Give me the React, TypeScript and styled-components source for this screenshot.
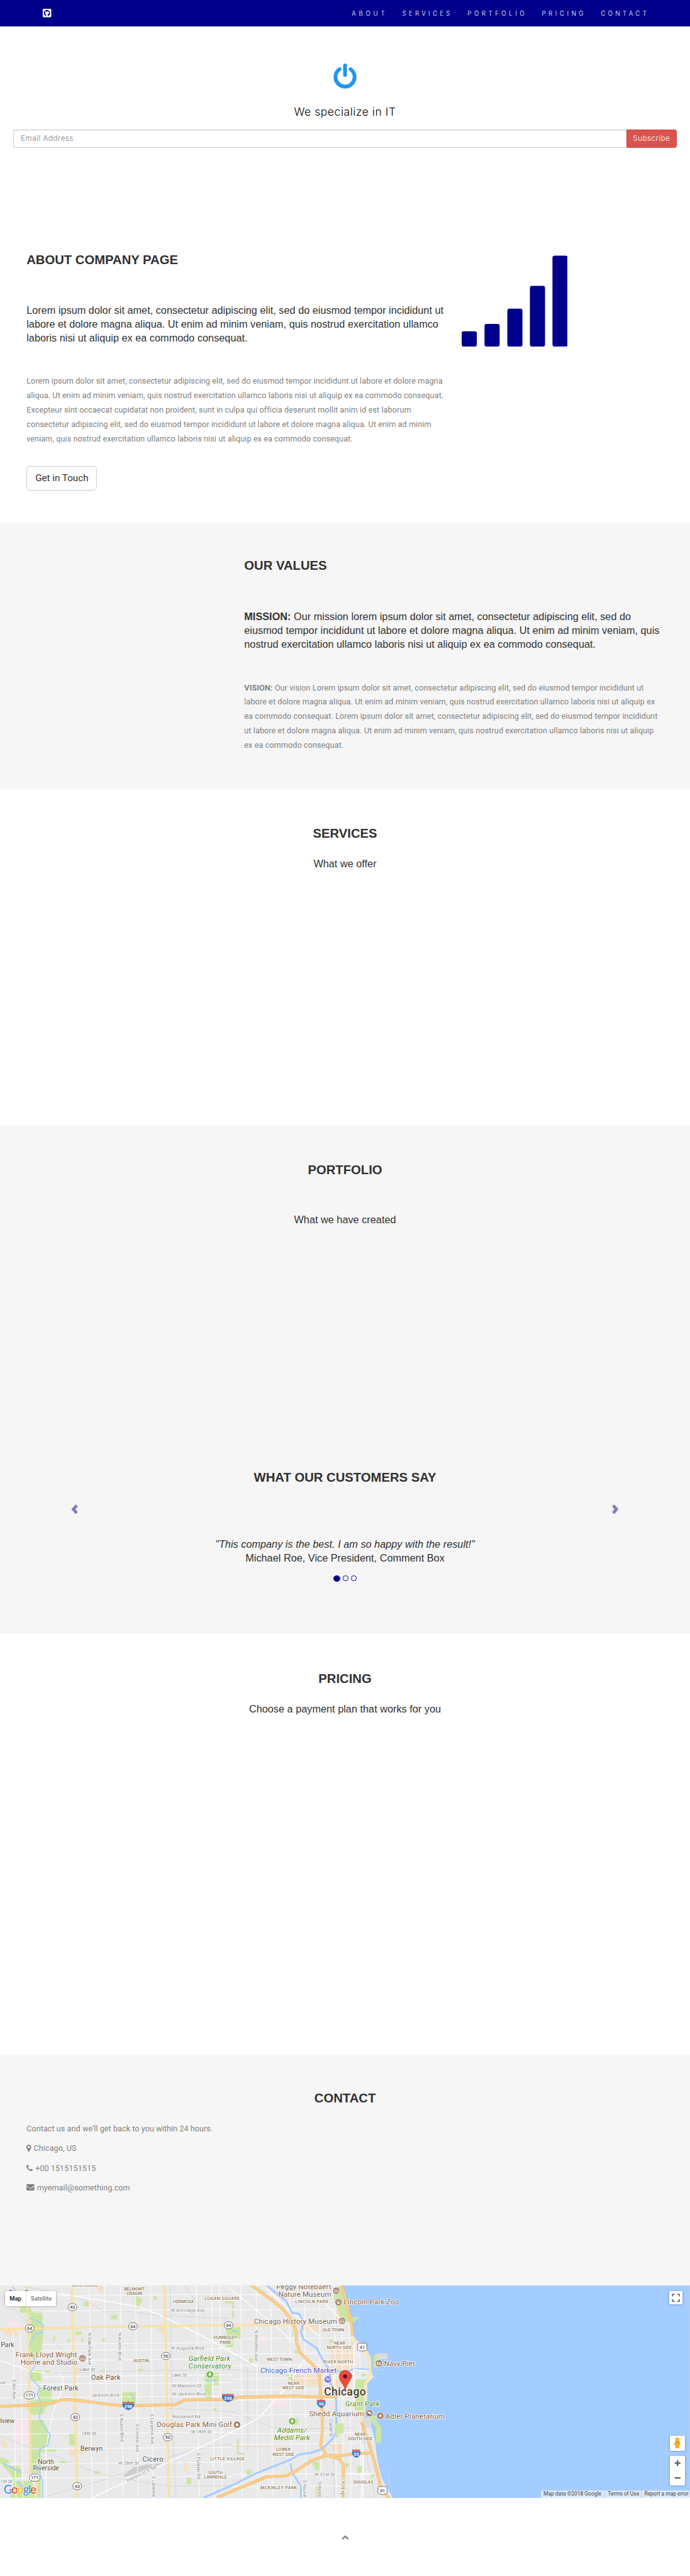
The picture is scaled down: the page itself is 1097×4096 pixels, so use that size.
import React from "react";
import styled, { createGlobalStyle } from "styled-components";
import { FaGithubSquare } from "react-icons/fa";

const GlobalStyle = createGlobalStyle`
  body { margin: 0; background: #fff; overflow-x: hidden; }
  *, *::before, *::after { box-sizing: border-box; }
`;

const SANS = `"Liberation Sans", Arial, sans-serif`;
const BODY = `Roboto, "Liberation Sans", sans-serif`;
const GEO = `Inter, "Open Sans", sans-serif`;

const Page = styled.div`
  zoom: 0.8442;
  width: 1299.5px;
  height: 4851px;
  overflow: hidden;
  display: flex;
  flex-direction: column;
  font: 15px/27px ${BODY};
  color: #818181;
`;

const NavBar = styled.header`
  height: 50px;
  flex: none;
  background: #00008b;
  color: #fff;
  display: flex;
  justify-content: space-between;
  align-items: center;
  padding: 0 63px 0 79px;
`;
const Brand = styled.a`
  display: flex;
  font-size: 18.3px;
`;
const NavList = styled.nav`
  display: flex;
`;
const NavLink = styled.a<{ $width: number; $gap: number }>`
  width: ${(p) => p.$width}px;
  padding: 2px 0 0 15px;
  white-space: nowrap;
  font: 300 11.6px/20px ${GEO};
  letter-spacing: ${(p) => p.$gap}px;
`;

const Hero = styled.section`
  height: 374px;
  flex: none;
  padding: 70px 25px 0;
  display: flex;
  flex-direction: column;
  align-items: center;
  font-family: ${GEO};
`;
const Tagline = styled.p`
  margin: 27px 0 0;
  color: #000;
  font-size: 20.8px;
  font-weight: 350;
  line-height: 30px;
  letter-spacing: 0.62px;
`;
const Subscribe = styled.form`
  display: flex;
  width: 100%;
  height: 34px;
  margin-top: 19px;
`;
const Email = styled.div`
  flex: 1;
  border: 1px solid #ccc;
  border-right: 0;
  border-radius: 4px 0 0 4px;
  box-shadow: inset 0 1px 1px rgba(0, 0, 0, 0.075);
  padding-left: 13px;
  font-size: 14px;
  font-weight: 400;
  line-height: 33px;
  letter-spacing: 0.42px;
  color: #999;
`;
const SubscribeButton = styled.button`
  width: 95px;
  padding: 0;
  border: 1px solid #d43f3a;
  border-radius: 0 4px 4px 0;
  background: #d9534f;
  color: #fff;
  font: 300 14px/32px ${GEO};
  letter-spacing: 0.5px;
`;

const Band = styled.section<{ $height: number; $tint?: boolean; $top: number; $center?: boolean }>`
  height: ${(p) => p.$height}px;
  flex: none;
  padding: ${(p) => p.$top}px 50px 0;
  background: ${(p) => (p.$tint ? "#f6f6f6" : "#fff")};
  text-align: ${(p) => (p.$center ? "center" : "left")};
`;
const Title = styled.h2<{ $top?: number; $bottom?: number; $center?: boolean }>`
  margin: ${(p) => p.$top ?? 0}px 0 ${(p) => p.$bottom ?? 0}px;
  font: bold 24px/33px ${SANS};
  color: #303030;
  ${(p) => p.$center && "text-align: center;"}
`;
const Lead = styled.h4<{ $top: number }>`
  margin: ${(p) => p.$top}px 0 0;
  font: normal 19.25px/26.125px ${SANS};
  letter-spacing: 0.022px;
  color: #303030;
  white-space: nowrap;
`;
const Copy = styled.p<{ $top: number }>`
  margin: ${(p) => p.$top}px 0 0;
  letter-spacing: 0.085px;
  white-space: nowrap;
`;
const Columns = styled.div<{ $left: number; $width: number }>`
  display: grid;
  grid-template-columns: ${(p) => p.$width}px 1fr;
  padding-left: ${(p) => p.$left}px;
  column-gap: 18px;
`;
const TouchButton = styled.button`
  display: block;
  margin-top: 37px;
  width: 133px;
  height: 46px;
  padding: 0;
  border: 1px solid #ccc;
  border-radius: 6px;
  background: #fff;
  color: #333;
  font: 18px/24px ${BODY};
`;
const Signal = styled.svg`
  width: 200px;
  height: 172px;
  margin-top: 6.5px;
`;

const CarouselRow = styled.div`
  display: flex;
  justify-content: space-between;
  padding: 0 84px;
  margin-top: 29.5px;
  height: 30px;
`;
const Arrow = styled.svg`
  width: 14px;
  height: 28px;
  overflow: visible;
  fill: #7b79c2;
  filter: drop-shadow(0 1px 1px rgba(0, 0, 0, 0.3));
`;
const Dots = styled.div`
  display: flex;
  justify-content: center;
  align-items: center;
  gap: 5.5px;
  margin-top: 19px;
  height: 12px;
`;
const Dot = styled.span<{ $active?: boolean }>`
  width: ${(p) => (p.$active ? 12 : 10)}px;
  height: ${(p) => (p.$active ? 12 : 10)}px;
  border: 1px solid #00008b;
  border-radius: 50%;
  background: ${(p) => (p.$active ? "#00008b" : "transparent")};
`;

const ContactLine = styled.p`
  display: flex;
  align-items: center;
  gap: 4.5px;
  margin: 0 0 10px;
  height: 27px;
  letter-spacing: 0.04px;
`;
const Glyph = styled.svg`
  fill: #818181;
  flex: none;
  margin-top: -3px;
`;

const MapFrame = styled.section`
  position: relative;
  height: 400px;
  flex: none;
  overflow: hidden;
  background: #a3ccff;
`;
const MapArt = styled.svg`
  display: block;
  width: 1299px;
  height: 400px;
  font-family: ${BODY};
`;
const MapTypes = styled.div`
  position: absolute;
  left: 10px;
  top: 10px;
  display: flex;
  height: 29px;
  background: #fff;
  border-radius: 2px;
  box-shadow: 0 1px 4px -1px rgba(0, 0, 0, 0.4);
  font-size: 11px;
  line-height: 29px;
  text-align: center;
`;
const MapType = styled.span<{ $active?: boolean }>`
  width: ${(p) => (p.$active ? 38 : 58)}px;
  color: ${(p) => (p.$active ? "#000" : "#565656")};
  font-weight: ${(p) => (p.$active ? 500 : 400)};
  border-left: ${(p) => (p.$active ? "0" : "1px solid #e2e2e2")};
`;
const MapControl = styled.div<{ $right: number; $top: number; $w: number; $h: number }>`
  position: absolute;
  right: ${(p) => p.$right}px;
  top: ${(p) => p.$top}px;
  width: ${(p) => p.$w}px;
  height: ${(p) => p.$h}px;
  background: #fff;
  border-radius: 2px;
  box-shadow: 0 1px 4px -1px rgba(0, 0, 0, 0.4);
  svg { display: block; }
`;
const Credits = styled.div`
  position: absolute;
  right: 0;
  bottom: 0;
  display: flex;
  gap: 1px;
  font-size: 10px;
  line-height: 14px;
  color: #444;
  white-space: nowrap;
`;
const Credit = styled.span<{ $w: number }>`
  width: ${(p) => p.$w}px;
  padding-left: 5px;
  background: rgba(245, 245, 245, 0.7);
`;
const Footer = styled.footer`
  display: flex;
  justify-content: center;
  padding-top: 70px;
`;

const LINKS: [string, number, number][] = [
  ["ABOUT", 95, 5.5],
  ["SERVICES", 123, 5.02],
  ["PORTFOLIO", 140, 5.28],
  ["PRICING", 111, 5.29],
  ["CONTACT", 120, 5.06],
];

type Pt = [number, number];
type Tag = [string, number, number];

const Label = ({ x, y, size = 30, fill = "#8c7350", anchor = "middle", weight = 500, italic, rotate, w, children }: {
  x: number; y: number; size?: number; fill?: string; anchor?: "start" | "middle" | "end";
  weight?: number; italic?: boolean; rotate?: number; w?: number; children: string;
}) => (
  <text x={x} y={y} fontSize={size} fill={fill} textAnchor={anchor} fontWeight={weight}
    fontStyle={italic ? "italic" : "normal"} stroke="#fff" strokeWidth={6} strokeLinejoin="round" paintOrder="stroke"
    textLength={w} transform={rotate === undefined ? undefined : `rotate(${rotate} ${x} ${y})`}>{children}</text>
);
const Street = ({ x, y, rotate, children, w }: { x: number; y: number; rotate?: number; w?: number; children: string }) => (
  <Label x={x} y={y} size={27} fill="#7d7d7d" anchor="start" weight={400} rotate={rotate} w={w}>{children}</Label>
);
const RouteBadge = ({ x, y, n }: { x: number; y: number; n: string }) => {
  const w = n.length > 2 ? 61 : 49;
  return (
    <g>
      <rect x={x - w / 2} y={y - 20} width={w} height={40} rx={20} fill="#fff" stroke="#555" strokeWidth={3} />
      <text x={x} y={y + 9} fontSize={26} fontWeight={500} textAnchor="middle" fill="#444">{n}</text>
    </g>
  );
};
const UsBadge = ({ x, y }: { x: number; y: number }) => (
  <g>
    <path d={`M${x - 20} ${y - 23}q10 6 20 0q10 6 20 0l7 9q-6 8 0 18q3 12-8 16q-12 0-19 5q-7-5-19-5q-11-4-8-16q6-10 0-18z`} fill="#fff" stroke="#555" strokeWidth={3} />
    <text x={x} y={y + 10} fontSize={26} fontWeight={500} textAnchor="middle" fill="#444">41</text>
  </g>
);
const Interstate = ({ x, y, n }: { x: number; y: number; n: string }) => {
  const h = n.length > 2 ? 34 : 24;
  return (
    <g>
      <path d={`M${x - h} ${y - 14}h${2 * h}q4 24-${h} 38q-${h + 4}-14-${h}-38z`} fill="#3b78c8" />
      <path d={`M${x - h + 2} ${y - 25}q${h / 2} 6 ${h - 2} 0q${h / 2} 6 ${h - 2} 0l-2 10h-${2 * h - 4}z`} fill="#d8575d" />
      <text x={x} y={y + 11} fontSize={26} fontWeight={700} textAnchor="middle" fill="#fff">{n}</text>
    </g>
  );
};
const Poi = ({ x, y, color = "#a07c64", kind = "museum" }: { x: number; y: number; color?: string; kind?: string }) => (
  <g transform={`translate(${x} ${y})`}>
    <circle r={20} fill={color} stroke="#fff" strokeWidth={3} />
    {kind === "museum" && <path d="M-11-3L0-10L11-3V8H-11ZM-5-1V5M0-1V5M5-1V5" fill="none" stroke="#fff" strokeWidth={3} />}
    {kind === "ring" && <circle r={8} fill="#fff" />}
    {kind === "tree" && <path d="M0-14L8-3H5L10 6H2V12H-2V6H-10L-5-3H-8Z" fill="#fff" />}
    {kind === "paw" && <g fill="#fff"><ellipse cy={5} rx={7} ry={5} /><circle cx={-9} cy={-2} r={3} /><circle cx={-4} cy={-8} r={3} /><circle cx={4} cy={-8} r={3} /><circle cx={9} cy={-2} r={3} /></g>}
    {kind === "cart" && <path d="M-11-8H-7L-4 4H7L10-5H-6M-3 9h1M6 9h1" fill="none" stroke="#fff" strokeWidth={4} />}
    {kind === "camera" && <g><rect x={-10} y={-5} width={20} height={14} fill="#fff" /><circle cy={2} r={4} fill={color} /><circle cx={-7} cy={-9} r={2.5} fill="#fff" /></g>}
    {kind === "fish" && <path d="M-12-8Q2-14 11 0V10L3 3Q-5 5-12-8Z" fill="#fff" />}
  </g>
);

const PARKS_WEST: string[] = [
  "M112 160H165V200H112Z", "M165 45V165L190 200H240V260L245 300L240 370L235 412L200 460L165 450L175 300L170 200Z",
  "M170 540L195 525H235V585H180Z", "M225 620L290 640V690L320 690L265 730L240 775H180L150 740L155 700L215 690Z",
  "M175 805H245L285 890L270 950L225 970H177Z", "M177 970H320V983H230V1105H180L165 1060Z",
  "M0 1015L50 1030V1065H110L120 1085V1130H90V1150H180L200 1245H60L80 1150L50 1100L0 1050Z",
  "M200 1140H230V1245H215Z", "M762 108H788V118H803V145H790V170H762Z", "M687 648H768V715H687Z",
  "M1157 540H1238V608H1195V685H1158Z", "M867 108H888V125H867Z", "M472 137H503V162H472Z", "M627 212H663V236H627Z",
  "M426 303H459V325H426Z", "M578 343H598V362H578Z", "M1055 1130H1080V1170H1055Z", "M335 1035L378 1040V1053H340Z",
  "M458 345H472V365H458Z", "M300 328H312V360H300Z", "M380 347H395V367H380Z", "M390 880H424V950H392Z",
  "M530 1095H564V1110H535Z", "M783 516H808V528H783Z", "M568 524H594V535H568Z", "M248 527H282V540H248Z",
  "M1202 738H1222V752H1202Z", "M1278 280H1360V350H1318V395H1278ZM1268 135H1322V230H1312V145H1268Z",
];
const PARKS_EAST: string[] = [
  "M590 60L645 45L665 150L700 225L745 222L700 260L640 235L600 140Z",
  "M720 575H800L775 600V750H735V760L715 745Z", "M750 545H778V558H750Z", "M820 435H845V510H820Z",
  "M790 780H835V800L865 850L862 935H835V850Z", "M470 1045L513 1040V1090H495Z", "M728 1065H755V1105H728Z",
  "M605 825H650V880H620V905H605Z", "M338 562H365V582H345Z", "M367 795H395V832H367Z", "M375 410H398V430H375Z",
  "M118 458H140V480H118Z", "M570 350H592V370H570Z", "M495 1180H520V1245H495Z", "M50 910L58 910V990H90V1000H50Z",
  "M362 300H372V330H362Z", "M800 1110H826V1130H805Z", "M660 1040L683 1055V1070H662Z", "M100 1090L130 1085V1115H105Z",
];
const TAN: string[] = [
  "M15 300L75 290L120 325L40 335Z", "M545 45H585V85H560Z", "M890 280H928V325H910V300H890Z", "M415 515H445V545H415Z",
  "M1035 1040H1060V1095H1040Z", "M392 970H478V995H430V1010H392Z", "M700 1215H740V1222H700Z", "M0 920L40 930V960L20 970Z",
  "M1870 410H1990V560H1870Z", "M1640 550H1820V610H1640Z", "M1860 560H1985V640H1860Z", "M1700 255H1800V300H1700Z",
  "M1900 130H1950V250H1900Z", "M1300 950H1600V958H1300Z", "M1850 940L1930 930L1940 1000H1920Z", "M1970 360H2000V500H1970Z",
];
const PINK: string[] = [
  "M50 240L110 255V290H50Z", "M85 808H160V950L90 930Z", "M505 135H535V165H505Z", "M660 475H678V497H660Z",
  "M1225 650H1240V680H1225Z", "M1575 665H1625V725H1535V690Z", "M2000 430H2035V460H2000Z", "M1470 330H1495V370H1470Z",
];
const WEST_V = [75, 115, 505, 590, 680, 765, 852, 1110, 1195, 1240];
const WEST_H = [100, 185, 373, 408, 465, 556, 600, 675, 797, 880, 965, 1050, 1130];
const EAST_V = [70, 157, 240, 345, 430, 515, 600, 640, 683, 740];
const EAST_H = [95, 180, 345, 430, 495, 570, 632, 690, 775, 880, 940, 1110, 1180];
const YELLOW_ROADS: string[] = [
  "M150 45L157 170L160 350L165 530L168 850L175 980V1060L168 1100L208 1140V1245",
  "M406 45L410 270L420 520L425 780L432 1000L437 1245",
  "M930 45L934 270L940 500L945 800L950 1040L955 1245",
  "M0 292L250 287L700 277L1290 269L1450 266L1700 264",
];
const LAKE_ROAD: string[] = ["M1993 330L2010 360L2060 410L2090 460V570L2060 600V750L2042 760V815L2055 850"];
const FREEWAYS: string[] = [
  "M0 727L170 722L230 715L295 710L345 692L380 690L460 697L560 710L680 724L790 724L990 718L1040 694L1100 691L1310 690L1340 677L1690 670L1750 675L1910 674",
  "M1415 40L1540 130L1600 180L1640 230L1675 305L1675 370L1700 430L1775 500L1805 550L1812 670L1820 760L1820 880L1812 950L1845 1005L1920 1025L1940 1060V1250",
  "M1225 1245L1340 1195L1510 1125L1620 1120L1670 1095L1760 1035L1845 1005L1940 1005L2010 995L2090 992",
  "M1930 40L1970 190L1985 260L1993 330",
  "M2042 815L2085 940L2120 1060L2155 1200L2200 1250",
];
const RIVER = "M1510 45L1560 90L1615 130L1650 200L1690 205L1715 250L1700 310L1715 350L1790 400L1825 470L1860 520L1868 600L1890 650L1900 700L1900 870L1880 910L1820 970L1760 990L1690 1000L1640 1030L1540 1070L1440 1110L1320 1170L1150 1245";
const CREEK = "M70 50L100 90L145 140L165 180L160 230L210 245L245 270L240 310L200 320L170 370L160 420L200 470L200 495L170 540L175 570L225 620L210 660L220 680L235 720L220 790L240 830L285 890L270 950L222 970L225 1040L220 1090L240 1150V1245";
const RAILS: string[] = [
  "M130 50L330 90L430 110L520 150L585 192L720 190L900 215L1290 230", "M0 100L160 260L300 370L390 440",
  "M0 895L180 965L340 1020L480 1080L640 1130L960 1180L1320 1175", "M300 540L700 530L1320 520L1700 560",
  "M960 45L972 800L995 1245", "M270 1235L600 1140L900 1030L1180 955L1320 940", "M1040 45L1110 140L1160 235",
  "M1340 440L1400 520V980", "M950 740L1320 760L1540 850L1750 855L2000 850", "M2045 850L2060 960L2120 1245", "M1880 830L1890 1245",
];

const MAP_POIS: Tag[] = [["museum", 466, 457], ["museum", 1900, 75], ["paw", 1912, 140], ["museum", 1933, 245], ["camera", 2140, 485], ["fish", 2087, 767], ["ring", 2149, 781], ["ring", 1339, 832]];
const ROUTES: Tag[] = [["43", 409, 168], ["64", 167, 288], ["64", 751, 276], ["64", 1291, 270], ["50", 937, 444], ["171", 166, 666], ["43", 425, 789], ["50", 947, 903], ["171", 196, 1131], ["43", 436, 1179]];

const areas = (ds: string[], fill: string) => ds.map((d) => <path key={d} d={d} fill={fill} />);
const roads = (ds: string[], color: string, edge: string, w: number) => (
  <g fill="none" strokeLinejoin="round">
    {ds.map((d) => <path key={d} d={d} stroke={edge} strokeWidth={w} />)}
    {ds.map((d) => <path key={d + "i"} d={d} stroke={color} strokeWidth={w - 5} />)}
  </g>
);

const ChicagoMap = () => (
  <MapArt viewBox="0 45 3897 1200">
    <rect y={45} width={3897} height={1200} fill="#e9e9e9" />
    {areas(PINK, "#f7e6ee")}
    {areas(TAN, "#f3dfc8")}
    <path d="M680 1130L760 1070L920 1045L960 1030L900 1060L790 1100L700 1130Z" fill="#ccc" />
    {areas(PARKS_WEST, "#cbe6a3")}
    <g stroke="#d0d0d0" strokeWidth={3} fill="none">{RAILS.map((d) => <path key={d} d={d} />)}</g>
    <g stroke="#fff" strokeWidth={3.5} fill="none">
      {WEST_V.map((x) => <path key={x} d={`M${x} ${x < 120 ? 300 : 45}L${x + 15} 1245`} />)}
      {WEST_H.map((y) => <path key={y} d={`M${y < 560 ? 240 : 0} ${y + 5}L1320 ${y - 6}`} />)}
      {EAST_V.map((x) => <path key={x} d={`M${x + 1290} 45L${x + 1300} 1245`} />)}
      {EAST_H.map((y) => <path key={y} d={`M1310 ${y + 3}L2020 ${y - 3}`} />)}
      <path strokeWidth={6} d="M320 90L520 120L780 165L900 210L1020 270L1180 350L1320 430L1450 500M520 1245L700 1160L970 1035L1330 865L1460 795L1620 620L1720 460" />
      <path strokeWidth={5} d="M1290 55L1530 250L1680 385M1500 60L1700 240L1800 330M1790 100L1930 240M0 470L180 530L260 540M260 1245V960L300 760L355 620V570L330 540" />
    </g>
    <g fill="none" stroke="#a3ccff" strokeLinejoin="round">
      <path d={CREEK} strokeWidth={6} />
      <path d={RIVER} strokeWidth={11} />
      <path d="M1855 530L1970 530L2000 515L2090 520M1640 1050L1650 1100L1700 1180V1245" strokeWidth={9} />
      <path d="M100 1150Q110 1180 160 1195M15 1050L120 1100M740 660L755 670V690M1165 580L1190 590M1200 575L1225 590M1310 300L1345 305" strokeWidth={8} />
    </g>
    <path d="M1925 45H3897V1245H2220L2155 1130L2130 1020L2120 930L2100 850L2060 790L2060 760L2075 690V600L2110 565L2098 520V460L2085 430L2040 370L2000 345L1985 250L1950 150Z" fill="#a3ccff" />
    <path d="M2120 433L2130 430H2189V462H2140L2120 500ZM2042 790H2100L2095 850H2060Z" fill="#dcdcdc" />
    <path d="M2095 520H2180M2118 530V575M2150 1100Q2200 1080 2200 1140Q2195 1170 2180 1172" fill="none" stroke="#cadcf2" strokeWidth={3} />
    <g transform="translate(1290 0)">{areas(PARKS_EAST, "#cbe6a3")}</g>
    <path d="M1995 345V330M2000 380V700M1885 555L2000 545V520L2090 530M1885 555V670M1995 672H1910M2050 940V1245M1960 1110H2110" fill="none" stroke="#fff" strokeWidth={6} />
    {roads(YELLOW_ROADS, "#ffe8a8", "#f5d591", 11)}
    {roads(LAKE_ROAD, "#ffefb5", "#ead9a0", 12)}
    {roads(FREEWAYS, "#ffd08a", "#e9b36a", 16)}

    <Label x={480} y={53} size={25}>MONTCLARE</Label>
    <Label x={759} y={72} size={25}>BELMONT</Label><Label x={759} y={99} size={25}>CRAGIN</Label>
    <Label x={1036} y={144} size={25}>HERMOSA</Label>
    <Label x={1255} y={126} size={25} w={198}>LOGAN SQUARE</Label>
    <Label x={1273} y={348} size={25}>HUMBOLDT</Label><Label x={1273} y={375} size={25}>PARK</Label>
    <Label x={797} y={480} size={25}>AUSTIN</Label>
    <Label x={1286} y={1032} size={25} w={195}>LITTLE VILLAGE</Label>
    <Label x={1217} y={1110} size={25}>SOUTH</Label><Label x={1217} y={1137} size={25}>LAWNDALE</Label>
    <Label x={140} y={98} size={36} fill="#54492f" weight={400}>River Grove</Label>
    <Label x={4} y={395} size={38} fill="#54492f" weight={400} anchor="start">Park</Label>
    <Label x={597} y={578} size={40} fill="#54492f" weight={400} w={166}>Oak Park</Label>
    <Label x={343} y={640} size={38} fill="#54492f" weight={400} w={198}>Forest Park</Label>
    <Label x={1} y={822} size={36} fill="#54492f" weight={400} anchor="start">lview</Label>
    <Label x={517} y={979} size={38} fill="#54492f" weight={400} w={126}>Berwyn</Label>
    <Label x={864} y={1040} size={40} fill="#54492f" weight={400} w={118}>Cicero</Label>
    <Label x={260} y={1053} size={36} fill="#54492f" weight={400}>North</Label>
    <Label x={260} y={1090} size={36} fill="#54492f" weight={400}>Riverside</Label>
    <Label x={435} y={450} size={41} fill="#7d5b45" weight={400} anchor="end" w={347}>Frank Lloyd Wright</Label>
    <Label x={437} y={492} size={41} fill="#7d5b45" weight={400} anchor="end" w={321}>Home and Studio</Label>
    <Label x={886} y={846} size={41} fill="#7d5b45" weight={400} anchor="start" w={425}>Douglas Park Mini Golf</Label>
    <Label x={1183} y={471} size={41} fill="#3f8a14" weight={400} italic w={236}>Garfield Park</Label>
    <Label x={1186} y={513} size={41} fill="#3f8a14" weight={400} italic w={241}>Conservatory</Label>

    <Street x={965} y={195} w={190}>W Armitage Ave</Street><Street x={965} y={408} w={188}>W Augusta Blvd</Street>
    <Street x={449} y={530}>Lake St</Street><Street x={968} y={559}>Lake St</Street>
    <Street x={971} y={622} w={166}>W Madison St</Street><Street x={972} y={666} w={190}>W Jackson Blvd</Street>
    <Street x={514} y={675} w={159}>Jackson Blvd</Street><Street x={975} y={794} w={157}>Roosevelt Rd</Street>
    <Street x={1079} y={879}>W 16th St</Street><Street x={459} y={891}>16th St</Street>
    <Street x={668} y={1057}>W 26th St</Street><Street x={1} y={1160}>1st St</Street><Street x={1} y={603}>vd</Street>
    <Street x={497} y={310} rotate={90} w={186}>N Oak Park Ave</Street><Street x={668} y={310} rotate={90} w={160}>N Austin Blvd</Street>
    <Street x={69} y={575} rotate={89}>S 9th Ave</Street><Street x={678} y={770} rotate={89} w={158}>S Austin Blvd</Street>
    <Street x={766} y={828} rotate={90} w={160}>S Central Ave</Street><Street x={849} y={770} rotate={89} w={172}>S Laramie Ave</Street>
    <Street x={859} y={1122} rotate={90} w={119}>S Laramie</Street><Street x={1112} y={990} rotate={89} w={150}>S Pulaski Rd</Street>
    <Street x={722} y={1157} rotate={-26} w={182}>Historic U.S. 66</Street>

    {ROUTES.map(([n, x, y]) => <RouteBadge key={`${x}-${y}`} n={n} x={x} y={y} />)}
    <Interstate x={725} y={726} n="290" /><Interstate x={1288} y={681} n="290" />
    <Interstate x={1815} y={714} n="90" /><Interstate x={2013} y={996} n="55" />
    <UsBadge x={2047} y={393} /><UsBadge x={2161} y={1203} />
    {MAP_POIS.map(([k, x, y]) => <Poi key={`${x}-${y}`} kind={k} x={x} y={y} />)}
    <Poi x={1186} y={548} kind="tree" color="#6bb13f" /><Poi x={1651} y={812} kind="tree" color="#6bb13f" />
    <Poi x={1852} y={576} kind="cart" color="#6c73e0" />

    <g transform="translate(1290 0)">
      <Label x={581} y={66} size={41} fill="#7d5b45" weight={400} anchor="end" w={310}>Peggy Notebaert</Label>
      <Label x={581} y={108} size={41} fill="#7d5b45" weight={400} anchor="end" w={298}>Nature Museum</Label>
      <Label x={652} y={153} size={41} fill="#7d5b45" weight={400} anchor="start" w={312}>Lincoln Park Zoo</Label>
      <Label x={614} y={261} size={41} fill="#7d5b45" weight={400} anchor="end" w={469}>Chicago History Museum</Label>
      <Label x={880} y={501} size={41} fill="#7d5b45" weight={400} anchor="start" w={175}>Navy Pier</Label>
      <Label x={766} y={783} size={41} fill="#7d5b45" weight={400} anchor="end" w={309}>Shedd Aquarium</Label>
      <Label x={888} y={798} size={41} fill="#7d5b45" weight={400} anchor="start" w={335}>Adler Planetarium</Label>
      <Label x={396} y={540} size={41} fill="#4650c8" weight={400} w={430}>Chicago French Market</Label>
      <Label x={757} y={729} size={41} fill="#3f8a14" weight={400} italic w={194}>Grant Park</Label>
      <Label x={360} y={876} size={41} fill="#3f8a14" weight={400} italic w={168}>Addams/</Label>
      <Label x={360} y={918} size={41} fill="#3f8a14" weight={400} italic w={203}>Medill Park</Label>
      <Label x={471} y={144} size={25} w={187}>LINCOLN PARK</Label>
      <Label x={593} y={306} size={25}>OLD TOWN</Label>
      <Label x={629} y={378} size={25}>NEAR</Label><Label x={627} y={405} size={25}>NORTH SIDE</Label>
      <Label x={288} y={471} size={25}>WEST TOWN</Label><Label x={621} y={486} size={25} w={169}>RIVER NORTH</Label>
      <Label x={368} y={606} size={25}>NEAR</Label><Label x={368} y={633} size={25}>WEST SIDE</Label>
      <Label x={745} y={894} size={25}>NEAR</Label><Label x={745} y={921} size={25}>SOUTH SIDE</Label>
      <Label x={311} y={981} size={25}>LOWER</Label><Label x={311} y={1008} size={25}>WEST SIDE</Label>
      <Label x={763} y={1164} size={25}>DOUGLAS</Label><Label x={284} y={1197} size={25} w={206}>MCKINLEY PARK</Label>
      <Street x={148} y={296} rotate={90} w={178}>N Western Ave</Street>
      <Street x={570} y={802} rotate={89}>Canal St</Street>
      <Street x={487} y={1122}>W 31st St</Street>
      <Street x={423} y={1145} rotate={90} w={98}>S Racine</Street><Street x={508} y={1153} rotate={90} w={90}>S Halste</Street>
      <Label x={641} y={1133} size={27} fill="#8c6a28" anchor="start" weight={400} rotate={90} w={108}>I-90 Expr</Label>
      <circle cx={680} cy={557} r={20} fill="#a07c64" />
      <Label x={659} y={667} size={62} fill="#46391f" weight={500} w={236}>Chicago</Label>
      <path d="M660 640C655 600 627 590 627 558A33 33 0 0 1 693 558C693 590 665 600 660 640Z" fill="#ee4a40" stroke="#a8352e" strokeWidth={3} />
      <circle cx={660} cy={559} r={11} fill="#55100f" />
    </g>

    <text x={20} y={1221} fontSize={67} fontFamily={'Lato, "Liberation Sans", sans-serif'} fontWeight={500} textLength={186} stroke="#fff" strokeWidth={5} paintOrder="stroke">
      <tspan fill="#4285f4">G</tspan><tspan fill="#ea4335">o</tspan><tspan fill="#fbbc05">o</tspan><tspan fill="#4285f4">g</tspan><tspan fill="#34a853">l</tspan><tspan fill="#ea4335">e</tspan>
    </text>
  </MapArt>
);

const BARS: Pt[] = [[0, 29], [43, 43], [86, 71.5], [128.5, 114.5], [171, 171.5]];

export default function App() {
  return (
    <>
      <GlobalStyle />
      <Page>
        <NavBar>
          <Brand><FaGithubSquare /></Brand>
          <NavList>
            {LINKS.map(([t, w, g]) => <NavLink key={t} $width={w} $gap={g}>{t}</NavLink>)}
          </NavList>
        </NavBar>

        <Hero>
          <svg width="44" height="48" viewBox="0 0 44 48" fill="none" stroke="#2196f3" strokeWidth="7.2" strokeLinecap="round">
            <path d="M11.5 10.8A18 18 0 1 0 32.5 10.8M22 3.6V21.5" />
          </svg>
          <Tagline>We specialize in IT</Tagline>
          <Subscribe>
            <Email>Email Address</Email>
            <SubscribeButton type="button">Subscribe</SubscribeButton>
          </Subscribe>
        </Hero>

        <Band $height={560} $top={50}>
          <Columns $left={0} $width={801}>
            <div>
              <Title>ABOUT COMPANY PAGE</Title>
              <Lead $top={63.5}>
                Lorem ipsum dolor sit amet, consectetur adipiscing elit, sed do eiusmod tempor incididunt ut<br />
                labore et dolore magna aliqua. Ut enim ad minim veniam, quis nostrud exercitation ullamco<br />
                laboris nisi ut aliquip ex ea commodo consequat.
              </Lead>
              <Copy $top={56.5}>
                Lorem ipsum dolor sit amet, consectetur adipiscing elit, sed do eiusmod tempor incididunt ut labore et dolore magna<br />
                aliqua. Ut enim ad minim veniam, quis nostrud exercitation ullamco laboris nisi ut aliquip ex ea commodo consequat.<br />
                Excepteur sint occaecat cupidatat non proident, sunt in culpa qui officia deserunt mollit anim id est laborum<br />
                consectetur adipiscing elit, sed do eiusmod tempor incididunt ut labore et dolore magna aliqua. Ut enim ad minim<br />
                veniam, quis nostrud exercitation ullamco laboris nisi ut aliquip ex ea commodo consequat.
              </Copy>
              <TouchButton>Get in Touch</TouchButton>
            </div>
            <Signal viewBox="0 0 200 172" fill="#00008b">
              {BARS.map(([x, h]) => <rect key={x} x={x} y={172 - h} width="28.5" height={h} rx="4" />)}
            </Signal>
          </Columns>
        </Band>

        <Band $height={503} $top={66} $tint>
          <Columns $left={410} $width={789}>
            <div>
              <Title>OUR VALUES</Title>
              <Lead $top={64.5}>
                <strong>MISSION:</strong> Our mission lorem ipsum dolor sit amet, consectetur adipiscing elit, sed do<br />
                eiusmod tempor incididunt ut labore et dolore magna aliqua. Ut enim ad minim veniam, quis<br />
                nostrud exercitation ullamco laboris nisi ut aliquip ex ea commodo consequat.
              </Lead>
              <Copy $top={56.5}>
                <strong>VISION:</strong> Our vision Lorem ipsum dolor sit amet, consectetur adipiscing elit, sed do eiusmod tempor incididunt ut<br />
                labore et dolore magna aliqua. Ut enim ad minim veniam, quis nostrud exercitation ullamco laboris nisi ut aliquip ex<br />
                ea commodo consequat. Lorem ipsum dolor sit amet, consectetur adipiscing elit, sed do eiusmod tempor incididunt<br />
                ut labore et dolore magna aliqua. Ut enim ad minim veniam, quis nostrud exercitation ullamco laboris nisi ut aliquip<br />
                ex ea commodo consequat.
              </Copy>
            </div>
          </Columns>
        </Band>

        <Band $height={633} $top={67.5} $center>
          <Title>SERVICES</Title>
          <Lead $top={26}>What we offer</Lead>
        </Band>

        <Band $height={958} $top={67.5} $tint $center>
          <Title>PORTFOLIO</Title>
          <Lead $top={63.5}>What we have created</Lead>
          <Title $top={456.5}>WHAT OUR CUSTOMERS SAY</Title>
          <CarouselRow>
            <Arrow viewBox="0 0 14 28"><path d="M1 14L8.6 5.2L12.4 8.6L7.6 14L12.4 19.4L8.6 22.8Z" /></Arrow>
            <Arrow viewBox="0 0 14 28"><path d="M13 14L5.4 5.2L1.6 8.6L6.4 14L1.6 19.4L5.4 22.8Z" /></Arrow>
          </CarouselRow>
          <Lead $top={36.5}><em>"This company is the best. I am so happy with the result!"</em><br />Michael Roe, Vice President, Comment Box</Lead>
          <Dots><Dot $active /><Dot /><Dot /></Dots>
        </Band>

        <Band $height={793} $top={68} $center>
          <Title>PRICING</Title>
          <Lead $top={26}>Choose a payment plan that works for you</Lead>
        </Band>

        <Band $height={434} $top={65} $tint>
          <Title $center $bottom={28}>CONTACT</Title>
          <ContactLine>Contact us and we'll get back to you within 24 hours.</ContactLine>
          <ContactLine>
            <Glyph width="9" height="14" viewBox="384 128 1024 1536"><path d="M1152 640q0-106-75-181t-181-75-181 75-75 181 75 181 181 75 181-75 75-181zm256 0q0 109-33 179l-364 774q-16 33-47.5 52t-67.5 19-67.5-19-46.5-52l-365-774q-33-70-33-179 0-212 150-362t362-150 362 150 150 362z" /></Glyph>
            Chicago, US
          </ContactLine>
          <ContactLine>
            <Glyph width="12" height="12" viewBox="192 128 1408 1409"><path d="M1600 1240q0 27-10 70.5t-21 68.5q-21 50-122 106-94 51-186 51-27 0-53-3.5t-57-12.5-47-14.5-55.5-20.5-49.5-18q-98-35-175-83-127-79-264-216t-216-264q-48-77-83-175-3-9-18-49.5t-20.5-55.5-14.5-47-12.5-57-3.5-53q0-92 51-186 56-101 106-122 25-11 68.5-21t70.5-10q14 0 21 3 18 6 53 76 11 19 30 54t35 63.5 31 53.5q3 4 17.5 25t21.5 35.5 7 28.5q0 20-28.5 50t-62 55-62 53-28.5 46q0 9 5 22.5t8.5 20.5 14 24 11.5 19q76 137 174 235t235 174q2 1 19 11.5t24 14 20.5 8.5 22.5 5q18 0 46-28.5t53-62 55-62 50-28.5q14 0 28.5 7t35.5 21.5 25 17.5q25 15 53.5 31t63.5 35 54 30q70 35 76 53 3 7 3 21z" /></Glyph>
            +00 1515151515
          </ContactLine>
          <ContactLine>
            <Glyph width="15" height="12" viewBox="0 256 1792 1408" preserveAspectRatio="none"><path d="M1792 710v794q0 66-47 113t-113 47h-1472q-66 0-113-47t-47-113v-794q44 49 101 87 362 246 497 345 57 42 92.5 65.5t94.5 48 110 24.5h2q51 0 110-24.5t94.5-48 92.5-65.5q170-123 498-345 57-39 100-87zm0-294q0 79-49 151t-122 123q-376 261-468 325-10 7-42.5 31t-54 38.5-52 32.5-57.5 27-50 9h-2q-23 0-50-9t-57.5-27-52-32.5-54-38.5-42.5-31q-91-64-262-182.5t-205-142.5q-62-42-117-115.5t-55-136.5q0-78 41.5-130t118.5-52h1472q65 0 112.5 47t47.5 113z" /></Glyph>
            myemail@something.com
          </ContactLine>
        </Band>

        <MapFrame>
          <ChicagoMap />
          <MapTypes><MapType $active>Map</MapType><MapType>Satellite</MapType></MapTypes>
          <MapControl $right={14} $top={10} $w={25} $h={25}>
            <svg width="25" height="25" fill="none" stroke="#666" strokeWidth="2"><path d="M6 10V6H10M15 6H19V10M19 15V19H15M10 19H6V15" /></svg>
          </MapControl>
          <MapControl $right={10} $top={283} $w={28} $h={28}>
            <svg width="28" height="28"><path d="M10.5 10H17.5L19.5 17H17V23H11V17H8.5Z" fill="#f5b31e" stroke="#b98a2b" strokeWidth=".7" /><circle cx="14" cy="7" r="3.7" fill="#fbc02d" stroke="#b98a2b" strokeWidth=".5" /><path d="M12 10.5H16L14 13.5Z" fill="#e5771e" /></svg>
          </MapControl>
          <MapControl $right={10} $top={321} $w={28} $h={55}>
            <svg width="28" height="55" fill="none" stroke="#666" strokeWidth="3"><path d="M9 13.5H20M14.5 8V19M9 41.5H20" /><path d="M4 27.5H23" stroke="#e6e6e6" strokeWidth="1" /></svg>
          </MapControl>
          <Credits><Credit $w={120}>Map data ©2018 Google</Credit><Credit $w={68}>Terms of Use</Credit><Credit $w={91}>Report a map error</Credit></Credits>
        </MapFrame>

        <Footer>
          <svg width="14" height="10" viewBox="0 0 14 10" fill="none" stroke="#808080" strokeWidth="3"><path d="M1.2 7.6L7 2.2L12.8 7.6" /></svg>
        </Footer>
      </Page>
    </>
  );
}
